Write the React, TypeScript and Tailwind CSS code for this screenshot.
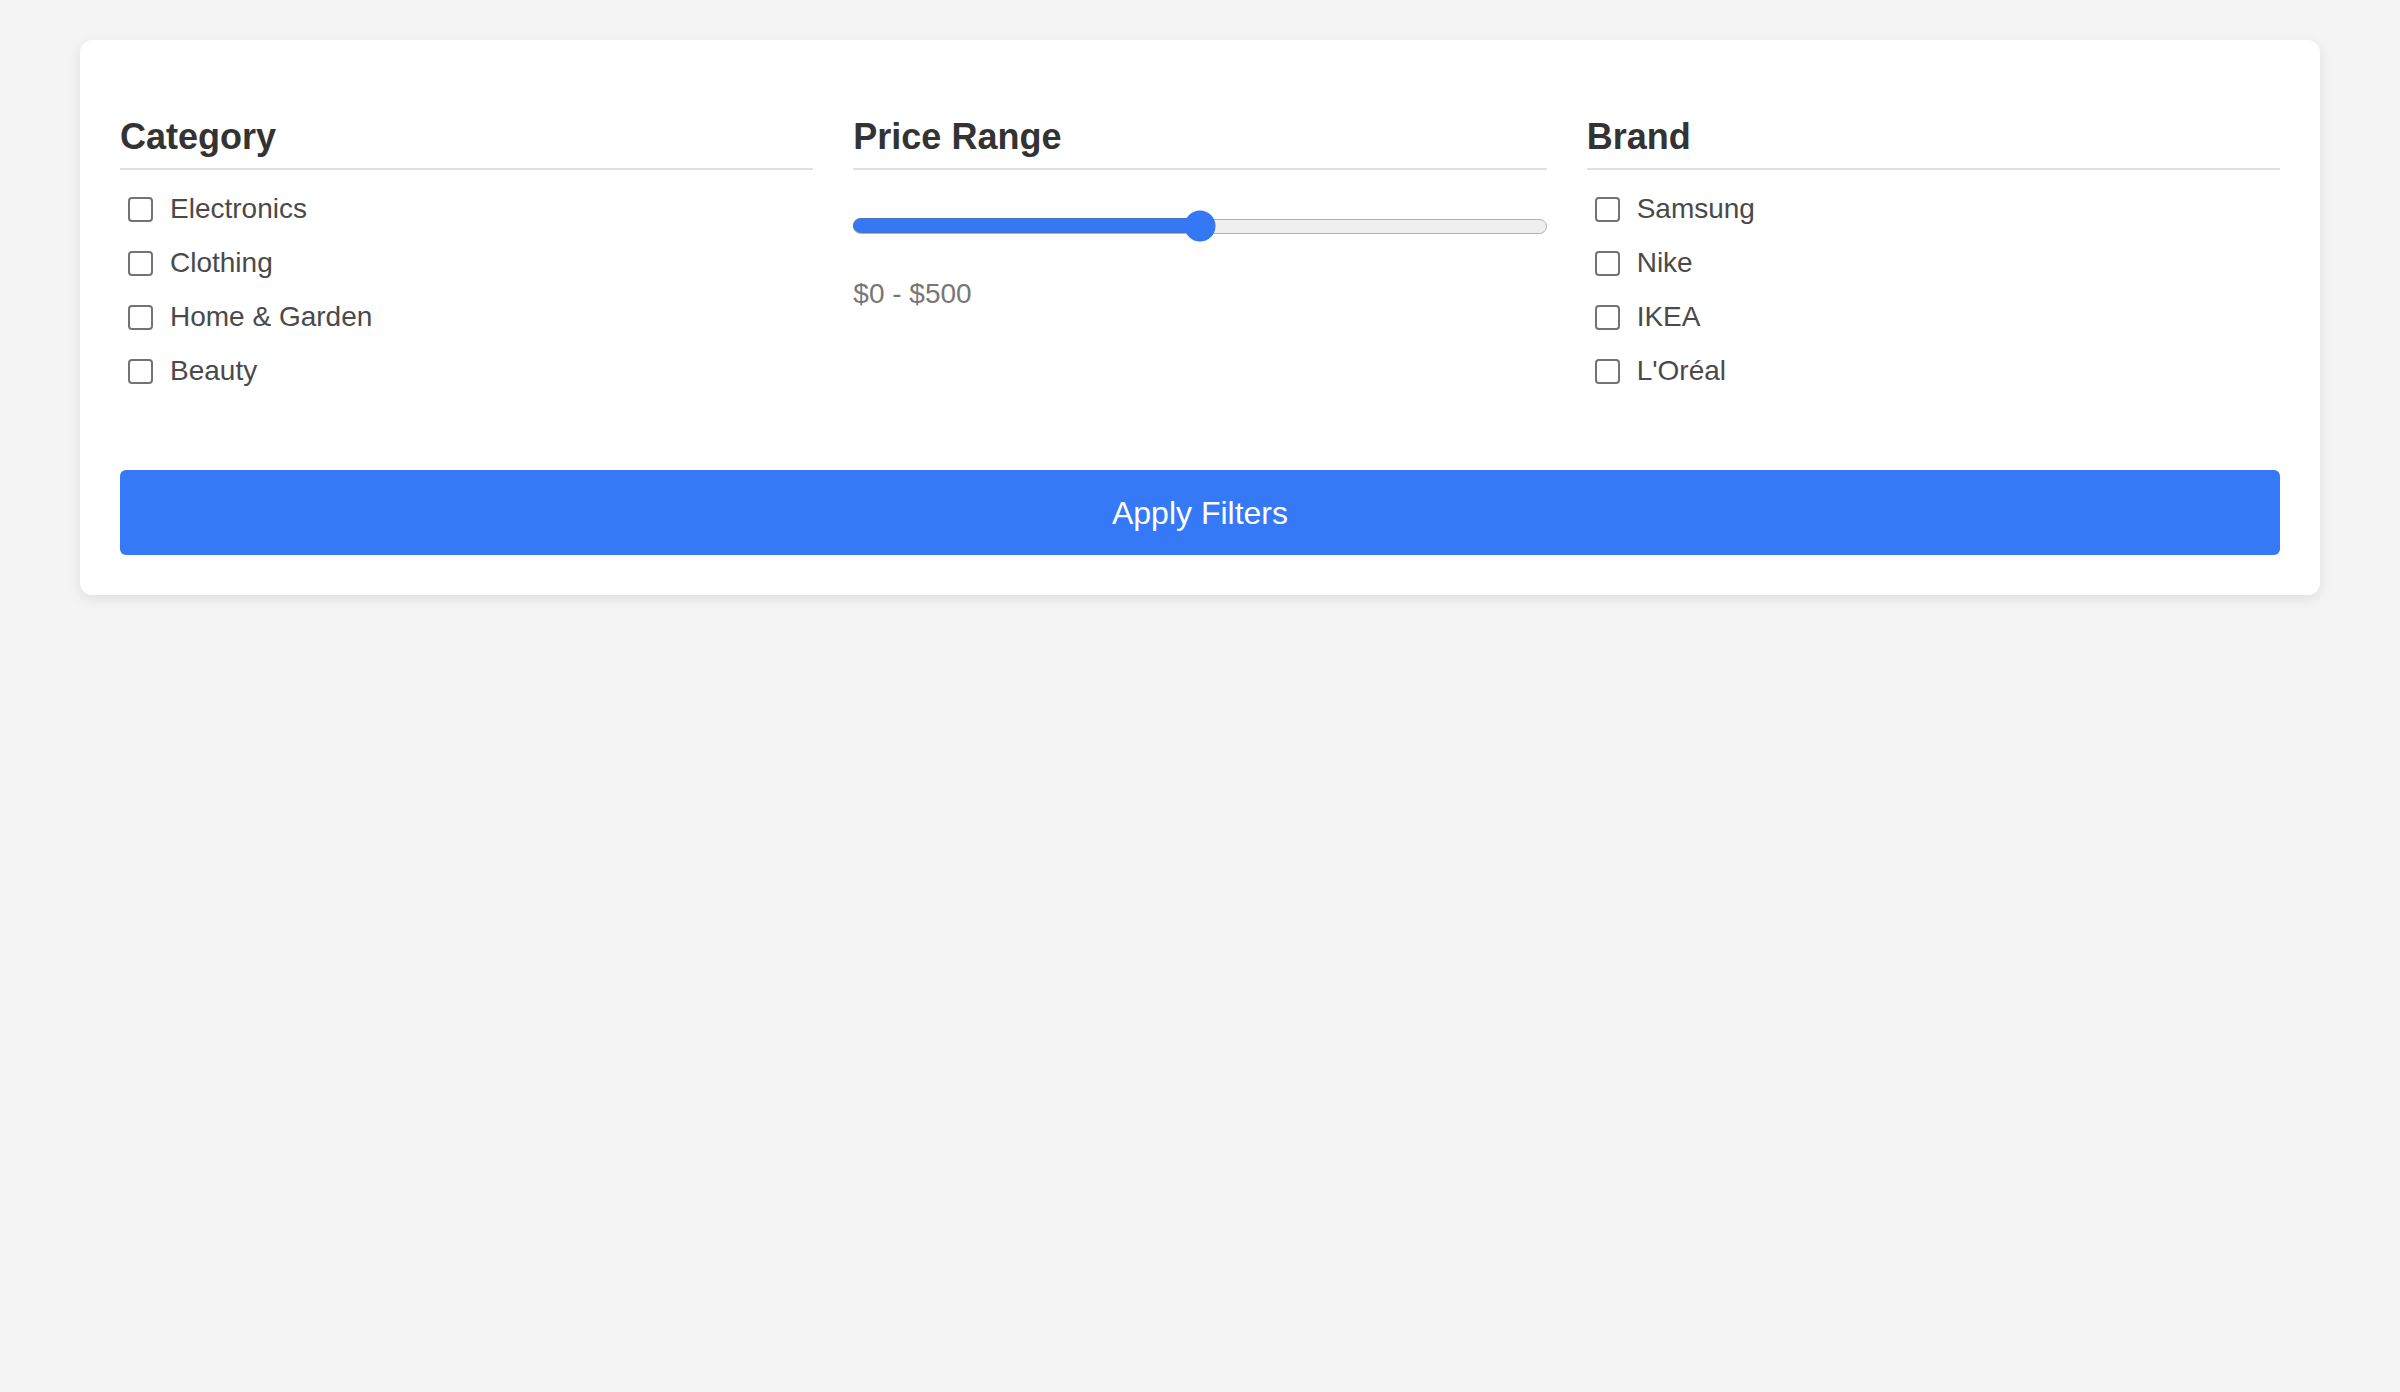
import { useState } from "react";

const categories = ["Electronics", "Clothing", "Home & Garden", "Beauty"];
const brands = ["Samsung", "Nike", "IKEA", "L'Oréal"];

function CheckList({ items }: { items: string[] }) {
  return (
    <ul className="mt-[23px] flex flex-col gap-[22px]">
      {items.map((item) => (
        <li key={item} className="h-[32px] flex items-center gap-[17px] pl-[8px]">
          <input
            type="checkbox"
            className="appearance-none m-0 shrink-0 w-[25px] h-[25px] border-2 border-[#737373] rounded-[4px] bg-white"
          />
          <label className="text-[28px] leading-[32px] text-[#4a4a4a]">{item}</label>
        </li>
      ))}
    </ul>
  );
}

function Heading({ children }: { children: React.ReactNode }) {
  return (
    <h3 className="text-[36px] leading-[41px] font-bold text-[#333] pb-[11px] border-b-2 border-[#e0e0e0]">
      {children}
    </h3>
  );
}

export default function App() {
  const [price] = useState(50);

  return (
    <div
      className="min-h-screen bg-[#f4f4f4] pt-[40px] px-[80px]"
      style={{ fontFamily: '"Liberation Sans", Arial, sans-serif' }}
    >
      <div className="bg-white rounded-[12px] shadow-[0_4px_14px_rgba(0,0,0,0.09)] px-[40px] pt-[76px] pb-[40px]">
        <div className="grid grid-cols-3 gap-x-[40px]">
          <div>
            <Heading>Category</Heading>
            <CheckList items={categories} />
          </div>
          <div>
            <Heading>Price Range</Heading>
            <div className="mt-[40px] h-[32px] flex items-center">
              <div className="relative w-full h-[15px] rounded-full bg-[#efefef] border-[1.5px] border-[#b2b2b2]">
                <div
                  className="absolute left-[-1.5px] top-[-1.5px] h-[15px] rounded-full bg-[#3478f6] border-[1.5px] border-[#4a72b8]"
                  style={{ width: `${price}%` }}
                />
                <div
                  className="absolute top-1/2 w-[31px] h-[31px] -translate-x-1/2 -translate-y-1/2 rounded-full bg-[#3478f6]"
                  style={{ left: `${price}%` }}
                />
              </div>
            </div>
            <p className="mt-[36px] text-[28px] leading-[32px] text-[#777]">$0 - $500</p>
          </div>
          <div>
            <Heading>Brand</Heading>
            <CheckList items={brands} />
          </div>
        </div>
        <button className="mt-[83px] w-full h-[85px] rounded-[6px] bg-[#3579f6] text-white text-[32px]">
          Apply Filters
        </button>
      </div>
    </div>
  );
}
